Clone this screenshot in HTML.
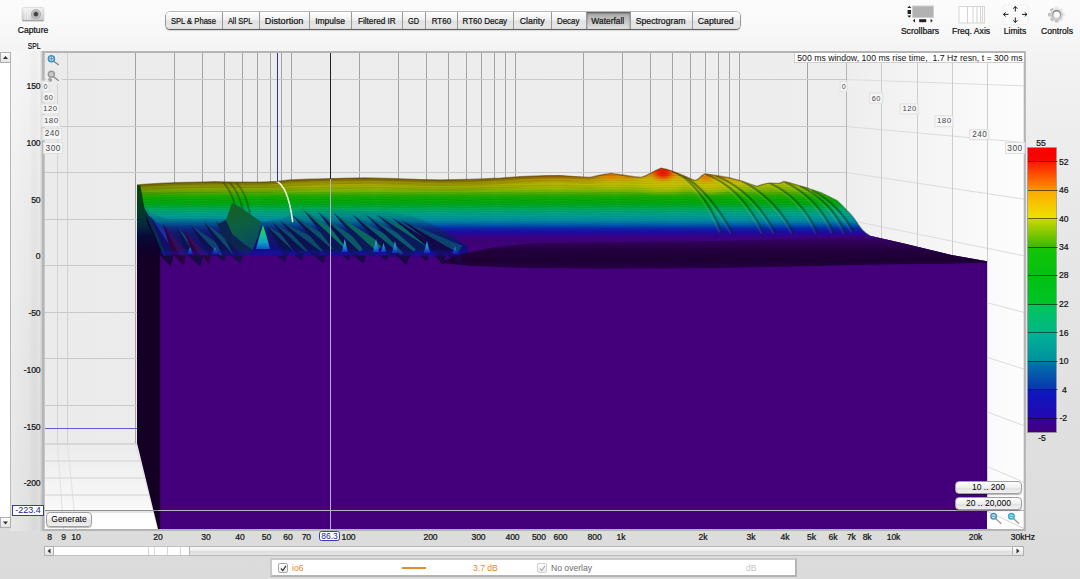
<!DOCTYPE html>
<html>
<head>
<meta charset="utf-8">
<title>REW Waterfall</title>
<style>
html,body{margin:0;padding:0;}
body{width:1080px;height:579px;overflow:hidden;position:relative;font-family:"Liberation Sans",sans-serif;font-size:9px;color:#000;
 background:linear-gradient(#fcfcfc 0px,#f8f8f8 30px,#f3f3f3 55px,#e9e9e9 200px,#e0e0e0 420px,#dbdbdb 579px);}
.abs{position:absolute;}
.lbl{position:absolute;white-space:nowrap;line-height:10px;font-size:8.6px;color:#111;-webkit-text-stroke:.22px;}
.yl,.xl{letter-spacing:-.12px;}
.yl{left:10px;width:30.5px;text-align:right;}
.xl{top:532px;width:40px;text-align:center;}
.tl{position:absolute;transform:translate(-50%,-50%);line-height:1;padding:1px 1px 0.5px 1.5px;color:#484848;background:rgba(247,247,247,.9);border:1px solid #dedede;letter-spacing:.45px;white-space:nowrap;}
#tabs{position:absolute;left:165.5px;top:12px;height:17px;width:574px;border-radius:4px;box-shadow:0 1px 1.5px rgba(0,0,0,.6),0 0 0 .6px rgba(0,0,0,.5);
 background:linear-gradient(#ffffff,#f0f0f0 45%,#e1e1e1 55%,#e6e6e6 85%,#dcdcdc);display:flex;overflow:hidden;}
#tabs div{-webkit-text-stroke:.2px;height:17px;line-height:18.6px;text-align:center;font-size:8.6px;white-space:nowrap;color:#111;border-right:1px solid #9a9a9a;box-sizing:border-box;}
#tabs div:last-child{border-right:none;}
#tabs span{display:inline-block;transform-origin:50% 50%;}
#tabs div.sel{background:linear-gradient(#9d9d9d,#b9b9b9 30%,#d0d0d0 70%,#e2e2e2);box-shadow:inset 0 1px 2px rgba(0,0,0,.5);}
.tb{position:absolute;text-align:center;font-size:8.6px;color:#111;-webkit-text-stroke:.22px;white-space:nowrap;line-height:10px;}
.btn{position:absolute;box-sizing:border-box;border:1px solid #9f9f9f;border-radius:4px;background:linear-gradient(#ffffff,#efefef 50%,#e0e0e0 52%,#f1f1f1);
 font-size:8.5px;text-align:center;box-shadow:0 1px 1px rgba(0,0,0,.28);white-space:nowrap;}
.sbb{box-sizing:border-box;border:1px solid #b0b0b0;background:linear-gradient(#fdfdfd,#e3e3e3);}
.cb{width:10px;height:10px;box-sizing:border-box;border:1px solid #a8a8a8;border-radius:2px;background:linear-gradient(#fff,#ececec);}
</style>
</head>
<body>
<div id="tabs">
<div style="width:57px"><span style="transform:scaleX(0.886)">SPL &amp; Phase</span></div><div style="width:37px"><span style="transform:scaleX(0.866)">All SPL</span></div><div style="width:50px"><span style="transform:scaleX(1.063)">Distortion</span></div><div style="width:42px"><span style="transform:scaleX(0.987)">Impulse</span></div><div style="width:51px"><span style="transform:scaleX(0.954)">Filtered IR</span></div><div style="width:23px"><span style="transform:scaleX(0.861)">GD</span></div><div style="width:32px"><span style="transform:scaleX(0.935)">RT60</span></div><div style="width:56px"><span style="transform:scaleX(0.939)">RT60 Decay</span></div><div style="width:38px"><span style="transform:scaleX(1.022)">Clarity</span></div><div style="width:35px"><span style="transform:scaleX(0.924)">Decay</span></div><div class="sel" style="width:44px"><span style="transform:scaleX(0.979)">Waterfall</span></div><div style="width:62px"><span style="transform:scaleX(1.012)">Spectrogram</span></div><div style="width:47px"><span style="transform:scaleX(1.015)">Captured</span></div>
</div>
<div class="tb" style="left:13px;top:25px;width:40px;">Capture</div>
<div class="tb" style="left:895px;top:26px;width:50px;">Scrollbars</div>
<div class="tb" style="left:946px;top:26px;width:50px;">Freq. Axis</div>
<div class="tb" style="left:995px;top:26px;width:40px;">Limits</div>
<div class="tb" style="left:1035px;top:26px;width:44px;">Controls</div>
<div class="lbl" style="left:24px;top:41px;width:20px;text-align:center"><span style="display:inline-block;transform:scaleX(.78)">SPL</span></div>

<svg id="plot" class="abs" style="left:0;top:0" width="1080" height="579" viewBox="0 0 1080 579">
<defs>
<linearGradient id="bw" x1="0" y1="0" x2="1" y2="0"><stop offset="0" stop-color="#ebebeb"/><stop offset="1" stop-color="#eeeeee"/></linearGradient>
<linearGradient id="rw" x1="0" y1="0" x2="1" y2="0"><stop offset="0" stop-color="#eeeeee"/><stop offset=".8" stop-color="#fafafa"/><stop offset="1" stop-color="#fdfdfd"/></linearGradient>
<linearGradient id="ystrip" x1="0" y1="0" x2="1" y2="0"><stop offset="0" stop-color="#ffffff" stop-opacity=".32"/><stop offset=".55" stop-color="#ffffff" stop-opacity=".08"/><stop offset=".8" stop-color="#000000" stop-opacity="0"/><stop offset="1" stop-color="#000000" stop-opacity=".035"/></linearGradient>
<linearGradient id="lsoft" x1="0" y1="0" x2="1" y2="0"><stop offset="0" stop-color="#b4b4b4" stop-opacity="0"/><stop offset="1" stop-color="#b4b4b4" stop-opacity=".8"/></linearGradient>
<linearGradient id="fl" x1="0" y1="0" x2="0" y2="1"><stop offset="0" stop-color="#ececec"/><stop offset=".75" stop-color="#f8f8f8"/><stop offset=".8" stop-color="#ffffff"/><stop offset="1" stop-color="#ffffff"/></linearGradient>
<linearGradient id="rb" gradientUnits="userSpaceOnUse" x1="0" y1="165" x2="0" y2="265">
<stop offset="0" stop-color="#f40800"/>
<stop offset=".03" stop-color="#f41000"/>
<stop offset=".06" stop-color="#f03800"/>
<stop offset=".09" stop-color="#e86c00"/>
<stop offset=".12" stop-color="#e09400"/>
<stop offset=".15" stop-color="#d4b400"/>
<stop offset=".19" stop-color="#c4c000"/>
<stop offset=".225" stop-color="#a8bc00"/>
<stop offset=".255" stop-color="#80b800"/>
<stop offset=".285" stop-color="#48b000"/>
<stop offset=".315" stop-color="#18ac00"/>
<stop offset=".38" stop-color="#00aa10"/>
<stop offset=".42" stop-color="#00aa40"/>
<stop offset=".46" stop-color="#00a878"/>
<stop offset=".51" stop-color="#00a098"/>
<stop offset=".56" stop-color="#0088a8"/>
<stop offset=".60" stop-color="#0058b0"/>
<stop offset=".635" stop-color="#0c24b0"/>
<stop offset=".675" stop-color="#2008a4"/>
<stop offset=".715" stop-color="#38008c"/>
<stop offset=".76" stop-color="#40007a"/>
<stop offset=".9" stop-color="#43007a"/>
<stop offset="1" stop-color="#43007a"/>
</linearGradient>
<linearGradient id="olv" gradientUnits="userSpaceOnUse" x1="0" y1="176" x2="0" y2="194"><stop offset="0" stop-color="#5c4c00" stop-opacity=".55"/><stop offset=".6" stop-color="#607000" stop-opacity=".3"/><stop offset="1" stop-color="#408000" stop-opacity="0"/></linearGradient>
<linearGradient id="olvh" gradientUnits="userSpaceOnUse" x1="137" y1="0" x2="650" y2="0"><stop offset="0" stop-color="#343000" stop-opacity="1"/><stop offset=".68" stop-color="#343000" stop-opacity=".95"/><stop offset=".84" stop-color="#343000" stop-opacity=".6"/><stop offset="1" stop-color="#343000" stop-opacity="0"/></linearGradient>
<radialGradient id="glowr"><stop offset="0" stop-color="#f40c00" stop-opacity="1"/><stop offset=".35" stop-color="#f02800" stop-opacity=".9"/><stop offset=".65" stop-color="#ec7000" stop-opacity=".6"/><stop offset="1" stop-color="#e0b000" stop-opacity="0"/></radialGradient>
<radialGradient id="glowy"><stop offset="0" stop-color="#d4c000" stop-opacity=".85"/><stop offset=".55" stop-color="#c4c400" stop-opacity=".5"/><stop offset="1" stop-color="#a0c000" stop-opacity="0"/></radialGradient>
<radialGradient id="glowo"><stop offset="0" stop-color="#ec7400" stop-opacity=".9"/><stop offset=".5" stop-color="#e89000" stop-opacity=".6"/><stop offset="1" stop-color="#d8b400" stop-opacity="0"/></radialGradient>
<linearGradient id="grn" gradientUnits="userSpaceOnUse" x1="735" y1="0" x2="800" y2="0"><stop offset="0" stop-color="#40a800" stop-opacity="0"/><stop offset="1" stop-color="#40a800" stop-opacity=".22"/></linearGradient>
<pattern id="tex" patternUnits="userSpaceOnUse" width="60" height="2.4" patternTransform="rotate(0)"><path d="M0,0.6 Q15,-0.4 30,0.6 T60,0.6" fill="none" stroke="#002800" stroke-opacity=".35" stroke-width=".7"/></pattern>
<linearGradient id="rzone" gradientUnits="userSpaceOnUse" x1="0" y1="205" x2="0" y2="259"><stop offset="0" stop-color="#085060" stop-opacity="0"/><stop offset=".3" stop-color="#0a4068" stop-opacity=".3"/><stop offset=".55" stop-color="#0c1c60" stop-opacity=".85"/><stop offset=".8" stop-color="#0e0e78" stop-opacity=".95"/><stop offset=".92" stop-color="#180c90" stop-opacity="1"/><stop offset="1" stop-color="#43007a" stop-opacity="1"/></linearGradient>
<linearGradient id="modal" gradientUnits="userSpaceOnUse" x1="232" y1="203" x2="250" y2="250"><stop offset="0" stop-color="#186020"/><stop offset=".45" stop-color="#0c6040"/><stop offset="1" stop-color="#0a4868"/></linearGradient>
<linearGradient id="spike" gradientUnits="userSpaceOnUse" x1="0" y1="225" x2="0" y2="250"><stop offset="0" stop-color="#30d040"/><stop offset=".35" stop-color="#10cc80"/><stop offset=".7" stop-color="#10a0c8"/><stop offset="1" stop-color="#1048c8"/></linearGradient>
<linearGradient id="pk" gradientUnits="userSpaceOnUse" x1="0" y1="239" x2="0" y2="254"><stop offset="0" stop-color="#40c0d8"/><stop offset=".6" stop-color="#1c78d0"/><stop offset="1" stop-color="#1428c0"/></linearGradient>
<linearGradient id="bluefoot" gradientUnits="userSpaceOnUse" x1="0" y1="249" x2="0" y2="257"><stop offset="0" stop-color="#1020c0" stop-opacity="0"/><stop offset=".4" stop-color="#1414b8" stop-opacity=".9"/><stop offset=".8" stop-color="#2c08a0" stop-opacity=".9"/><stop offset="1" stop-color="#43007a" stop-opacity="1"/></linearGradient>
<linearGradient id="dband" gradientUnits="userSpaceOnUse" x1="0" y1="238" x2="0" y2="270"><stop offset="0" stop-color="#3e0078"/><stop offset=".2" stop-color="#34005e"/><stop offset=".4" stop-color="#260044"/><stop offset=".7" stop-color="#21003a"/><stop offset=".9" stop-color="#2a004c"/><stop offset="1" stop-color="#3a0068"/></linearGradient>
<clipPath id="dbclip"><polygon points="438,263 462,254 492,247.5 530,243.5 620,242 720,241 800,238.5 850,236 870,235.8 904,243.6 951.5,255 987,261.3 987,263 940,264 860,265 800,266.5 700,268.5 600,269 520,268 470,266"/></clipPath>
<linearGradient id="lface" gradientUnits="userSpaceOnUse" x1="0" y1="185" x2="0" y2="262"><stop offset="0" stop-color="#0c4400"/><stop offset=".3" stop-color="#043c20"/><stop offset=".5" stop-color="#042c3c"/><stop offset=".68" stop-color="#080838"/><stop offset=".85" stop-color="#10002a"/><stop offset="1" stop-color="#140024"/></linearGradient>
<linearGradient id="cs" x1="0" y1="0" x2="0" y2="1">
<stop offset="0.0001" stop-color="#f60000"/><stop offset="0.0500" stop-color="#f60800"/>
<stop offset="0.0501" stop-color="#ff1800"/><stop offset="0.1500" stop-color="#ff9400"/>
<stop offset="0.1501" stop-color="#ffa800"/><stop offset="0.2500" stop-color="#ece400"/>
<stop offset="0.2501" stop-color="#ccd800"/><stop offset="0.3500" stop-color="#38b800"/>
<stop offset="0.3501" stop-color="#14c408"/><stop offset="0.4500" stop-color="#04c010"/>
<stop offset="0.4501" stop-color="#00c010"/><stop offset="0.5500" stop-color="#00c428"/>
<stop offset="0.5501" stop-color="#00c458"/><stop offset="0.6500" stop-color="#00b888"/>
<stop offset="0.6501" stop-color="#00b494"/><stop offset="0.7500" stop-color="#0090a0"/>
<stop offset="0.7501" stop-color="#0078a8"/><stop offset="0.8500" stop-color="#0834b0"/>
<stop offset="0.8501" stop-color="#0c18c0"/><stop offset="0.9500" stop-color="#2408b0"/>
<stop offset="0.9501" stop-color="#3400a0"/><stop offset="1.0000" stop-color="#42007c"/>
</linearGradient>
</defs>

<rect x="11" y="51" width="34" height="480" fill="url(#ystrip)"/>
<rect x="42.5" y="51" width="983" height="480" fill="#b4b4b4"/>
<rect x="40" y="51" width="3" height="480" fill="url(#lsoft)"/>
<rect x="44.5" y="53" width="979.5" height="476" fill="#ffffff"/>
<polygon points="45,53 846,53 846,444 45,444" fill="url(#bw)"/>
<polygon points="846,53 1025,53 1025,529 846,444" fill="url(#rw)"/>
<polygon points="45,444 846,444 1025,529 45,529" fill="url(#fl)"/>
<g id="grid" stroke-width="1" fill="none"><line x1="57.5" y1="53" x2="57.5" y2="444" stroke="#d2d2d2"/>
<line x1="57.5" y1="444" x2="63.5" y2="529" stroke="#e2e2e2"/>
<line x1="67.5" y1="53" x2="67.5" y2="444" stroke="#d2d2d2"/>
<line x1="67.5" y1="444" x2="76.0" y2="529" stroke="#e2e2e2"/>
<line x1="135.5" y1="53" x2="135.5" y2="444" stroke="#a4a4a4"/>
<line x1="135.5" y1="444" x2="158.0" y2="529" stroke="#e2e2e2"/>
<line x1="174.5" y1="53" x2="174.5" y2="444" stroke="#a4a4a4"/>
<line x1="174.5" y1="444" x2="206.0" y2="529" stroke="#e2e2e2"/>
<line x1="202.5" y1="53" x2="202.5" y2="444" stroke="#a4a4a4"/>
<line x1="202.5" y1="444" x2="240.0" y2="529" stroke="#e2e2e2"/>
<line x1="224.5" y1="53" x2="224.5" y2="444" stroke="#a4a4a4"/>
<line x1="224.5" y1="444" x2="266.4" y2="529" stroke="#e2e2e2"/>
<line x1="242.5" y1="53" x2="242.5" y2="444" stroke="#a4a4a4"/>
<line x1="242.5" y1="444" x2="288.0" y2="529" stroke="#e2e2e2"/>
<line x1="257.5" y1="53" x2="257.5" y2="444" stroke="#a4a4a4"/>
<line x1="257.5" y1="444" x2="306.3" y2="529" stroke="#e2e2e2"/>
<line x1="270.5" y1="53" x2="270.5" y2="444" stroke="#a4a4a4"/>
<line x1="270.5" y1="444" x2="322.1" y2="529" stroke="#e2e2e2"/>
<line x1="281.5" y1="53" x2="281.5" y2="444" stroke="#a4a4a4"/>
<line x1="281.5" y1="444" x2="336.0" y2="529" stroke="#e2e2e2"/>
<line x1="291.5" y1="53" x2="291.5" y2="444" stroke="#a4a4a4"/>
<line x1="291.5" y1="444" x2="348.5" y2="529" stroke="#e2e2e2"/>
<line x1="359.5" y1="53" x2="359.5" y2="444" stroke="#a4a4a4"/>
<line x1="359.5" y1="444" x2="430.5" y2="529" stroke="#e2e2e2"/>
<line x1="398.5" y1="53" x2="398.5" y2="444" stroke="#a4a4a4"/>
<line x1="398.5" y1="444" x2="478.5" y2="529" stroke="#e2e2e2"/>
<line x1="426.5" y1="53" x2="426.5" y2="444" stroke="#a4a4a4"/>
<line x1="426.5" y1="444" x2="512.5" y2="529" stroke="#e2e2e2"/>
<line x1="448.5" y1="53" x2="448.5" y2="444" stroke="#a4a4a4"/>
<line x1="448.5" y1="444" x2="538.9" y2="529" stroke="#e2e2e2"/>
<line x1="466.5" y1="53" x2="466.5" y2="444" stroke="#a4a4a4"/>
<line x1="466.5" y1="444" x2="560.5" y2="529" stroke="#e2e2e2"/>
<line x1="481.5" y1="53" x2="481.5" y2="444" stroke="#a4a4a4"/>
<line x1="481.5" y1="444" x2="578.8" y2="529" stroke="#e2e2e2"/>
<line x1="494.5" y1="53" x2="494.5" y2="444" stroke="#a4a4a4"/>
<line x1="494.5" y1="444" x2="594.6" y2="529" stroke="#e2e2e2"/>
<line x1="505.5" y1="53" x2="505.5" y2="444" stroke="#a4a4a4"/>
<line x1="505.5" y1="444" x2="608.5" y2="529" stroke="#e2e2e2"/>
<line x1="515.5" y1="53" x2="515.5" y2="444" stroke="#a4a4a4"/>
<line x1="515.5" y1="444" x2="621.0" y2="529" stroke="#e2e2e2"/>
<line x1="583.5" y1="53" x2="583.5" y2="444" stroke="#a4a4a4"/>
<line x1="583.5" y1="444" x2="703.0" y2="529" stroke="#e2e2e2"/>
<line x1="622.5" y1="53" x2="622.5" y2="444" stroke="#a4a4a4"/>
<line x1="622.5" y1="444" x2="751.0" y2="529" stroke="#e2e2e2"/>
<line x1="650.5" y1="53" x2="650.5" y2="444" stroke="#a4a4a4"/>
<line x1="650.5" y1="444" x2="785.0" y2="529" stroke="#e2e2e2"/>
<line x1="672.5" y1="53" x2="672.5" y2="444" stroke="#a4a4a4"/>
<line x1="672.5" y1="444" x2="811.4" y2="529" stroke="#e2e2e2"/>
<line x1="690.5" y1="53" x2="690.5" y2="444" stroke="#a4a4a4"/>
<line x1="690.5" y1="444" x2="833.0" y2="529" stroke="#e2e2e2"/>
<line x1="705.5" y1="53" x2="705.5" y2="444" stroke="#a4a4a4"/>
<line x1="705.5" y1="444" x2="851.3" y2="529" stroke="#e2e2e2"/>
<line x1="718.5" y1="53" x2="718.5" y2="444" stroke="#a4a4a4"/>
<line x1="718.5" y1="444" x2="867.1" y2="529" stroke="#e2e2e2"/>
<line x1="729.5" y1="53" x2="729.5" y2="444" stroke="#a4a4a4"/>
<line x1="729.5" y1="444" x2="881.0" y2="529" stroke="#e2e2e2"/>
<line x1="739.5" y1="53" x2="739.5" y2="444" stroke="#a4a4a4"/>
<line x1="739.5" y1="444" x2="893.5" y2="529" stroke="#e2e2e2"/>
<line x1="807.5" y1="53" x2="807.5" y2="444" stroke="#a4a4a4"/>
<line x1="807.5" y1="444" x2="975.5" y2="529" stroke="#e2e2e2"/>
<line x1="45" y1="79.5" x2="846" y2="79.5" stroke="#c9c9c9"/>
<line x1="846" y1="79.5" x2="1025" y2="85.9" stroke="#dcdcdc"/>
<line x1="45" y1="126.5" x2="846" y2="126.5" stroke="#c9c9c9"/>
<line x1="846" y1="126.5" x2="1025" y2="142.6" stroke="#dcdcdc"/>
<line x1="45" y1="172.5" x2="846" y2="172.5" stroke="#c9c9c9"/>
<line x1="846" y1="172.5" x2="1025" y2="199.3" stroke="#dcdcdc"/>
<line x1="45" y1="219.5" x2="846" y2="219.5" stroke="#c9c9c9"/>
<line x1="846" y1="219.5" x2="1025" y2="256.0" stroke="#dcdcdc"/>
<line x1="45" y1="265.5" x2="846" y2="265.5" stroke="#c9c9c9"/>
<line x1="846" y1="265.5" x2="1025" y2="312.7" stroke="#dcdcdc"/>
<line x1="45" y1="312.5" x2="846" y2="312.5" stroke="#c9c9c9"/>
<line x1="846" y1="312.5" x2="1025" y2="369.4" stroke="#dcdcdc"/>
<line x1="45" y1="358.5" x2="846" y2="358.5" stroke="#c9c9c9"/>
<line x1="846" y1="358.5" x2="1025" y2="426.1" stroke="#dcdcdc"/>
<line x1="45" y1="405.5" x2="846" y2="405.5" stroke="#c9c9c9"/>
<line x1="846" y1="405.5" x2="1025" y2="482.8" stroke="#dcdcdc"/>
<line x1="846.5" y1="53" x2="846.5" y2="444.0" stroke="#b4b4b4"/>
<line x1="881.5" y1="53" x2="881.5" y2="461.0" stroke="#cdcdcd"/>
<line x1="881.5" y1="461.0" x2="45" y2="461.0" stroke="#dcdcdc" stroke-width="1.6"/>
<line x1="917.5" y1="53" x2="917.5" y2="478.0" stroke="#cdcdcd"/>
<line x1="917.5" y1="478.0" x2="45" y2="478.0" stroke="#dcdcdc" stroke-width="1.6"/>
<line x1="952.5" y1="53" x2="952.5" y2="495.0" stroke="#cdcdcd"/>
<line x1="952.5" y1="495.0" x2="45" y2="495.0" stroke="#dcdcdc" stroke-width="1.6"/>
<line x1="987.5" y1="53" x2="987.5" y2="512.0" stroke="#cdcdcd"/>
<line x1="987.5" y1="512.0" x2="45" y2="512.0" stroke="#dcdcdc" stroke-width="1.6"/>
<line x1="45" y1="444" x2="846" y2="444" stroke="#d0d0d0" stroke-width="1.6"/>
<line x1="846" y1="444.5" x2="1025" y2="529" stroke="#d4d4d4"/></g>
<rect x="43.5" y="52" width="981.2" height="478" fill="none" stroke="#b4b4b4" stroke-width="2"/>
<g id="wf">
<clipPath id="rbclip"><polygon points="137,184.9 150,184 175,182.8 200,182.2 215,181.8 235,182.2 260,182.3 277,181.4 290,180.0 310,179.2 335,178.6 365,178.0 395,178.8 420,179.6 440,180.0 470,179.4 500,178.2 520,176.8 545,175.8 560,175.6 575,176.6 590,177.4 601,175.0 611,173.4 622,175.0 634,176.8 641,177.4 646,175.6 651,173.0 656,170.4 661,168.3 666,169.2 672,171.1 683,175.5 690,178.6 695.5,180.6 699,178.4 702,175.6 705,174.0 710,174.6 715.5,175.5 729,177.8 742,181.2 751,184.4 757,186.3 762,184.6 768.5,183.1 776,183.4 780,183.2 784,181.6 790,183.0 799,185.6 809,188.5 821.5,192.8 828,196 837,200.6 841.5,204.7 847,210.5 851,214.4 855,219.6 858.5,224.8 862,229.4 865.5,232.8 870,235.8 904,243.6 951.5,255 987,261.3 987,300 137,300"/></clipPath>
<polygon fill="url(#rb)" points="137,184.9 150,184 175,182.8 200,182.2 215,181.8 235,182.2 260,182.3 277,181.4 290,180.0 310,179.2 335,178.6 365,178.0 395,178.8 420,179.6 440,180.0 470,179.4 500,178.2 520,176.8 545,175.8 560,175.6 575,176.6 590,177.4 601,175.0 611,173.4 622,175.0 634,176.8 641,177.4 646,175.6 651,173.0 656,170.4 661,168.3 666,169.2 672,171.1 683,175.5 690,178.6 695.5,180.6 699,178.4 702,175.6 705,174.0 710,174.6 715.5,175.5 729,177.8 742,181.2 751,184.4 757,186.3 762,184.6 768.5,183.1 776,183.4 780,183.2 784,181.6 790,183.0 799,185.6 809,188.5 821.5,192.8 828,196 837,200.6 841.5,204.7 847,210.5 851,214.4 855,219.6 858.5,224.8 862,229.4 865.5,232.8 870,235.8 904,243.6 951.5,255 987,261.3 987,300 137,300"/>
<g clip-path="url(#rbclip)">
<polyline points="137,184.9 150,184 175,182.8 200,182.2 215,181.8 235,182.2 260,182.3 277,181.4 290,180.0 310,179.2 335,178.6 365,178.0 395,178.8 420,179.6 440,180.0 470,179.4 500,178.2 520,176.8 545,175.8 560,175.6 575,176.6 590,177.4 601,175.0 611,173.4 622,175.0 634,176.8 641,177.4" fill="none" stroke="url(#olvh)" stroke-opacity=".13" stroke-width="22"/>
<polyline points="137,184.9 150,184 175,182.8 200,182.2 215,181.8 235,182.2 260,182.3 277,181.4 290,180.0 310,179.2 335,178.6 365,178.0 395,178.8 420,179.6 440,180.0 470,179.4 500,178.2 520,176.8 545,175.8 560,175.6 575,176.6 590,177.4 601,175.0 611,173.4 622,175.0 634,176.8 641,177.4" fill="none" stroke="url(#olvh)" stroke-opacity=".2" stroke-width="12"/>
<polyline points="137,184.9 150,184 175,182.8 200,182.2 215,181.8 235,182.2 260,182.3 277,181.4 290,180.0 310,179.2 335,178.6 365,178.0 395,178.8 420,179.6 440,180.0 470,179.4 500,178.2 520,176.8 545,175.8 560,175.6 575,176.6 590,177.4 601,175.0 611,173.4 622,175.0 634,176.8 641,177.4" fill="none" stroke="url(#olvh)" stroke-opacity=".3" stroke-width="5"/>
<rect x="735" y="175" width="140" height="22" fill="url(#grn)"/>
<ellipse cx="662" cy="183" rx="34" ry="13" fill="url(#glowy)"/>
<ellipse cx="710" cy="186" rx="24" ry="10" fill="url(#glowy)"/>
<ellipse cx="663" cy="172.5" rx="17" ry="11" fill="url(#glowr)"/>
<ellipse cx="707" cy="177" rx="14" ry="8" fill="url(#glowo)"/>
<ellipse cx="611" cy="175.5" rx="16" ry="6" fill="url(#glowo)"/>
<rect x="137" y="170" width="850" height="75" fill="url(#tex)" opacity=".55"/>
<path d="M672,171 Q700,182 722,232" fill="none" stroke="#003010" stroke-opacity=".42" stroke-width="2.2"/>
<path d="M672,171 Q700,182 722,232" transform="translate(-2.5,0.5)" fill="none" stroke="#c8ff60" stroke-opacity=".10" stroke-width="2"/>
<path d="M683,175.5 Q708,190 733,233" fill="none" stroke="#003010" stroke-opacity=".42" stroke-width="2.2"/>
<path d="M683,175.5 Q708,190 733,233" transform="translate(-2.5,0.5)" fill="none" stroke="#c8ff60" stroke-opacity=".10" stroke-width="2"/>
<path d="M706,174.5 Q740,186 764,233" fill="none" stroke="#003010" stroke-opacity=".42" stroke-width="2.2"/>
<path d="M706,174.5 Q740,186 764,233" transform="translate(-2.5,0.5)" fill="none" stroke="#c8ff60" stroke-opacity=".10" stroke-width="2"/>
<path d="M716,176 Q752,190 776,233" fill="none" stroke="#003010" stroke-opacity=".42" stroke-width="2.2"/>
<path d="M716,176 Q752,190 776,233" transform="translate(-2.5,0.5)" fill="none" stroke="#c8ff60" stroke-opacity=".10" stroke-width="2"/>
<path d="M742,181 Q775,198 794,233" fill="none" stroke="#003010" stroke-opacity=".42" stroke-width="2.2"/>
<path d="M742,181 Q775,198 794,233" transform="translate(-2.5,0.5)" fill="none" stroke="#c8ff60" stroke-opacity=".10" stroke-width="2"/>
<path d="M770,183.5 Q800,196 818,233" fill="none" stroke="#003010" stroke-opacity=".42" stroke-width="2.2"/>
<path d="M770,183.5 Q800,196 818,233" transform="translate(-2.5,0.5)" fill="none" stroke="#c8ff60" stroke-opacity=".10" stroke-width="2"/>
<path d="M785,182 Q818,198 834,233" fill="none" stroke="#003010" stroke-opacity=".42" stroke-width="2.2"/>
<path d="M785,182 Q818,198 834,233" transform="translate(-2.5,0.5)" fill="none" stroke="#c8ff60" stroke-opacity=".10" stroke-width="2"/>
<path d="M800,186 Q830,200 846,233" fill="none" stroke="#003010" stroke-opacity=".42" stroke-width="2.2"/>
<path d="M800,186 Q830,200 846,233" transform="translate(-2.5,0.5)" fill="none" stroke="#c8ff60" stroke-opacity=".10" stroke-width="2"/>
<path d="M812,190 Q838,204 854,232" fill="none" stroke="#003010" stroke-opacity=".42" stroke-width="2.2"/>
<path d="M812,190 Q838,204 854,232" transform="translate(-2.5,0.5)" fill="none" stroke="#c8ff60" stroke-opacity=".10" stroke-width="2"/>
<path d="M223,182 Q231,190 236,208" fill="none" stroke="#203800" stroke-opacity=".4" stroke-width="2"/>
<path d="M229,182 Q238,190 243,210" fill="none" stroke="#203800" stroke-opacity=".4" stroke-width="2"/>
<path d="M236,182.5 Q246,192 250,214" fill="none" stroke="#203800" stroke-opacity=".4" stroke-width="2"/>
</g>
<polyline points="137,184.9 150,184 175,182.8 200,182.2 215,181.8 235,182.2 260,182.3 277,181.4 290,180.0 310,179.2 335,178.6 365,178.0 395,178.8 420,179.6 440,180.0 470,179.4 500,178.2 520,176.8 545,175.8 560,175.6 575,176.6 590,177.4 601,175.0 611,173.4 622,175.0 634,176.8 641,177.4 646,175.6 651,173.0 656,170.4 661,168.3 666,169.2 672,171.1 683,175.5 690,178.6 695.5,180.6 699,178.4 702,175.6 705,174.0 710,174.6 715.5,175.5 729,177.8 742,181.2 751,184.4 757,186.3 762,184.6 768.5,183.1 776,183.4 780,183.2 784,181.6 790,183.0 799,185.6 809,188.5" fill="none" stroke="#4a3000" stroke-opacity=".5" stroke-width="1.4"/>
<polyline points="809,188.5 821.5,192.8 828,196 837,200.6 841.5,204.7 847,210.5 851,214.4 855,219.6 858.5,224.8 862,229.4 865.5,232.8 870,235.8" fill="none" stroke="#1c5a20" stroke-opacity=".45" stroke-width="1.2"/>
<g id="ridges">
<polygon points="141,200 150,212 166,219 225,219 262,222 282,219 300,209 345,210 385,212 412,216 440,228 468,247 468,259 160,259 152,234" fill="url(#rzone)"/>
<polygon points="141,203 175.7,257.9 166,262" fill="#082c50" opacity="1"/><polygon points="141,203 166,262 156.3,266.1" fill="#08042c" opacity="1"/>
<polygon points="150,216 186.7,252.2 178,258" fill="#1830a0" opacity="1"/><polygon points="150,216 178,258 169.3,263.8" fill="#101068" opacity="1"/>
<polygon points="163,224 192.3,258.5 184,263" fill="#30105c" opacity="1"/><polygon points="163,224 184,263 175.7,267.5" fill="#300040" opacity="1"/>
<polygon points="176,226 207.9,257.9 200,263" fill="#103c78" opacity="1"/><polygon points="176,226 200,263 192.1,268.1" fill="#0c1450" opacity="1"/>
<polygon points="184,231 212.0,258.4 205,263" fill="#30105c" opacity="1"/><polygon points="184,231 205,263 198.0,267.6" fill="#34003c" opacity="1"/>
<polygon points="190.5,225 226.8,249.5 220,256" fill="#0c4470" opacity="1"/><polygon points="190.5,225 220,256 213.2,262.5" fill="#0c1250" opacity="1"/>
<polygon points="204,222 241.1,249.7 234,256" fill="#0c4a6c" opacity="1"/><polygon points="204,222 234,256 226.9,262.3" fill="#0c1250" opacity="1"/>
<polygon points="216,221 247.5,246.7 241,252" fill="#0c5068" opacity="1"/><polygon points="216,221 241,252 234.5,257.3" fill="#0c1450" opacity="1"/>
<polygon points="266.5,226 298.5,243.1 292,250" fill="#0a4a6a" opacity="1"/><polygon points="266.5,226 292,250 285.5,256.9" fill="#0c1250" opacity="1"/>
<polygon points="272,222 312.3,244.9 306,252" fill="#0a4868" opacity="1"/><polygon points="272,222 306,252 299.7,259.1" fill="#0c1250" opacity="1"/>
<polygon points="280,221 327.2,244.4 321.5,252" fill="#0a4a6a" opacity="1"/><polygon points="280,221 321.5,252 315.8,259.6" fill="#0c1250" opacity="1"/>
<polygon points="292,215 338.5,243.6 333,250" fill="#0a5068" opacity="1"/><polygon points="292,215 333,250 327.5,256.4" fill="#0a1450" opacity="1"/>
<polygon points="304,210.6 350.5,241.1 344,248" fill="#087060" opacity="1"/><polygon points="304,210.6 344,248 337.5,254.9" fill="#0a1a58" opacity="1"/>
<polygon points="318,212 365.8,245.9 360,252" fill="#0a5868" opacity="1"/><polygon points="318,212 360,252 354.2,258.1" fill="#0c1450" opacity="1"/>
<polygon points="333.5,213 383.0,244.3 376.7,251.4" fill="#08685c" opacity="1"/><polygon points="333.5,213 376.7,251.4 370.4,258.5" fill="#0a1a58" opacity="1"/>
<polygon points="352.5,214.8 407.0,247.5 401,254.8" fill="#0a5c68" opacity="1"/><polygon points="352.5,214.8 401,254.8 395.0,262.1" fill="#0c1250" opacity="1"/>
<polygon points="366,215 419.1,245.3 414,252" fill="#085a6c" opacity="1"/><polygon points="366,215 414,252 408.9,258.7" fill="#0e1250" opacity="1"/>
<polygon points="376.7,214.8 432.1,239.0 427,247" fill="#086860" opacity="1"/><polygon points="376.7,214.8 427,247 421.9,255.0" fill="#0a1a5c" opacity="1"/>
<polygon points="392,218 450.4,243.8 446,251" fill="#0a4c70" opacity="1"/><polygon points="392,218 446,251 441.6,258.2" fill="#100c4c" opacity="1"/>
<polygon points="401,220 462.2,245.7 458,253" fill="#0a4470" opacity="1"/><polygon points="401,220 458,253 453.8,260.3" fill="#140848" opacity="1"/>
<polygon points="232,203 240,207 261.5,222 258,236 252.5,250 244,244 232,234 226,220" fill="url(#modal)"/>
<polygon points="226,220 232,234 244,244 252.5,250 246,256 236,250 222,236 218,224" fill="#0c2450"/>
<polygon points="263,225 259.5,236 256,249 270,249 266.5,236" fill="url(#spike)"/>
<polygon points="344.8,239 341.8,252 347.8,252" fill="url(#pk)"/>
<polygon points="376,239 373,252 379,252" fill="url(#pk)"/>
<polygon points="383.6,243 381.0,252 386.20000000000005,252" fill="url(#pk)"/>
<polygon points="395,241 392,253 398,253" fill="url(#pk)"/>
<polygon points="427,241 423.8,253 430.2,253" fill="url(#pk)"/>
<polygon points="455,246 452.4,254 457.6,254" fill="url(#pk)"/>
<polygon points="190,247 187,254 193,254" fill="url(#pk)"/>
<polygon points="215,247 212,254 218,254" fill="url(#pk)"/>
<rect x="160" y="249" width="300" height="8" fill="url(#bluefoot)" opacity=".38"/>
</g>
<polygon points="438,263 462,254 492,247.5 530,243.5 620,242 720,241 800,238.5 850,236 870,235.8 904,243.6 951.5,255 987,261.3 987,263 940,264 860,265 800,266.5 700,268.5 600,269 520,268 470,266" fill="url(#dband)"/>
<g clip-path="url(#dbclip)" stroke="#12001e" stroke-opacity=".32" stroke-width="1.6">
<line x1="380" y1="238" x2="465" y2="272"/>
<line x1="387" y1="238" x2="472" y2="272"/>
<line x1="394" y1="238" x2="479" y2="272"/>
<line x1="401" y1="238" x2="486" y2="272"/>
<line x1="408" y1="238" x2="493" y2="272"/>
<line x1="415" y1="238" x2="500" y2="272"/>
<line x1="422" y1="238" x2="507" y2="272"/>
<line x1="429" y1="238" x2="514" y2="272"/>
<line x1="436" y1="238" x2="521" y2="272"/>
<line x1="443" y1="238" x2="528" y2="272"/>
<line x1="450" y1="238" x2="535" y2="272"/>
<line x1="457" y1="238" x2="542" y2="272"/>
<line x1="464" y1="238" x2="549" y2="272"/>
<line x1="471" y1="238" x2="556" y2="272"/>
<line x1="478" y1="238" x2="563" y2="272"/>
<line x1="485" y1="238" x2="570" y2="272"/>
<line x1="492" y1="238" x2="577" y2="272"/>
<line x1="499" y1="238" x2="584" y2="272"/>
<line x1="506" y1="238" x2="591" y2="272"/>
<line x1="513" y1="238" x2="598" y2="272"/>
<line x1="520" y1="238" x2="605" y2="272"/>
<line x1="527" y1="238" x2="612" y2="272"/>
<line x1="534" y1="238" x2="619" y2="272"/>
<line x1="541" y1="238" x2="626" y2="272"/>
<line x1="548" y1="238" x2="633" y2="272"/>
<line x1="555" y1="238" x2="640" y2="272"/>
<line x1="562" y1="238" x2="647" y2="272"/>
<line x1="569" y1="238" x2="654" y2="272"/>
<line x1="576" y1="238" x2="661" y2="272"/>
<line x1="583" y1="238" x2="668" y2="272"/>
<line x1="590" y1="238" x2="675" y2="272"/>
<line x1="597" y1="238" x2="682" y2="272"/>
<line x1="604" y1="238" x2="689" y2="272"/>
<line x1="611" y1="238" x2="696" y2="272"/>
<line x1="618" y1="238" x2="703" y2="272"/>
<line x1="625" y1="238" x2="710" y2="272"/>
<line x1="632" y1="238" x2="717" y2="272"/>
<line x1="639" y1="238" x2="724" y2="272"/>
<line x1="646" y1="238" x2="731" y2="272"/>
<line x1="653" y1="238" x2="738" y2="272"/>
<line x1="660" y1="238" x2="745" y2="272"/>
<line x1="667" y1="238" x2="752" y2="272"/>
<line x1="674" y1="238" x2="759" y2="272"/>
<line x1="681" y1="238" x2="766" y2="272"/>
<line x1="688" y1="238" x2="773" y2="272"/>
<line x1="695" y1="238" x2="780" y2="272"/>
<line x1="702" y1="238" x2="787" y2="272"/>
<line x1="709" y1="238" x2="794" y2="272"/>
<line x1="716" y1="238" x2="801" y2="272"/>
<line x1="723" y1="238" x2="808" y2="272"/>
<line x1="730" y1="238" x2="815" y2="272"/>
<line x1="737" y1="238" x2="822" y2="272"/>
<line x1="744" y1="238" x2="829" y2="272"/>
<line x1="751" y1="238" x2="836" y2="272"/>
<line x1="758" y1="238" x2="843" y2="272"/>
<line x1="765" y1="238" x2="850" y2="272"/>
<line x1="772" y1="238" x2="857" y2="272"/>
<line x1="779" y1="238" x2="864" y2="272"/>
<line x1="786" y1="238" x2="871" y2="272"/>
<line x1="793" y1="238" x2="878" y2="272"/>
<line x1="800" y1="238" x2="885" y2="272"/>
<line x1="807" y1="238" x2="892" y2="272"/>
<line x1="814" y1="238" x2="899" y2="272"/>
<line x1="821" y1="238" x2="906" y2="272"/>
<line x1="828" y1="238" x2="913" y2="272"/>
<line x1="835" y1="238" x2="920" y2="272"/>
<line x1="842" y1="238" x2="927" y2="272"/>
<line x1="849" y1="238" x2="934" y2="272"/>
<line x1="856" y1="238" x2="941" y2="272"/>
<line x1="863" y1="238" x2="948" y2="272"/>
<line x1="870" y1="238" x2="955" y2="272"/>
<line x1="877" y1="238" x2="962" y2="272"/>
<line x1="884" y1="238" x2="969" y2="272"/>
<line x1="891" y1="238" x2="976" y2="272"/>
<line x1="898" y1="238" x2="983" y2="272"/>
<line x1="905" y1="238" x2="990" y2="272"/>
<line x1="912" y1="238" x2="997" y2="272"/>
<line x1="919" y1="238" x2="1004" y2="272"/>
<line x1="926" y1="238" x2="1011" y2="272"/>
<line x1="933" y1="238" x2="1018" y2="272"/>
<line x1="940" y1="238" x2="1025" y2="272"/>
<line x1="947" y1="238" x2="1032" y2="272"/>
<line x1="954" y1="238" x2="1039" y2="272"/>
<line x1="961" y1="238" x2="1046" y2="272"/>
<line x1="968" y1="238" x2="1053" y2="272"/>
<line x1="975" y1="238" x2="1060" y2="272"/>
</g>
<polygon points="160,256 300,256 380,256.5 436,258 440,263 470,266 520,268 600,269 700,268.5 800,266.5 860,265 940,264 987,263 987,529 158,529 158,262" fill="#43007a"/>
<polygon points="160,255.5 173.6,255.5 170.8,266.5" fill="#18083c"/>
<polygon points="174,255.5 185.9,255.5 183.45,265.5" fill="#2a0440"/>
<polygon points="188,255.5 203.3,255.5 200.15,266.5" fill="#1a0a44"/>
<polygon points="202,255.5 210.5,255.5 208.75,264.5" fill="#2c0440"/>
<polygon points="216,255.5 226.2,255.5 224.1,261.5" fill="#18104c"/>
<polygon points="231,255.5 242.9,255.5 240.45,263.5" fill="#16104c"/>
<polygon points="277,255.5 287.2,255.5 285.1,261.5" fill="#1a0c50"/>
<polygon points="295,255.5 303.5,255.5 301.75,260.5" fill="#1a0c50"/>
<polygon points="314,255.5 325.9,255.5 323.45,263.5" fill="#180c4c"/>
<polygon points="342,255.5 350.5,255.5 348.75,260.5" fill="#1a0c50"/>
<polygon points="354,255.5 365.9,255.5 363.45,263.5" fill="#180a48"/>
<polygon points="380,255.5 388.5,255.5 386.75,260.5" fill="#1a0a4c"/>
<polygon points="396,255.5 409.6,255.5 406.8,265.5" fill="#1a0848"/>
<polygon points="420,255.5 428.5,255.5 426.75,261.5" fill="#1a0848"/>
<polygon points="434,255.5 445.9,255.5 443.45,264.5" fill="#1c0644"/>
<polygon points="452,255.5 462.2,255.5 460.1,264.5" fill="#1c0644"/>
<polygon points="137,184.9 140.4,185.4 143.8,204.4 147.3,223.4 152.5,233.7 159.4,249.3 160.2,256.2 160.2,529 158,529 137,443" fill="url(#lface)"/>
<path d="M277.3,181.6 Q282.2,184.6 285.6,192 Q290.5,203.5 292.6,221.5" fill="none" stroke="#f4ffe0" stroke-width="1.5" stroke-linecap="round"/>
</g>
<!-- cursors -->
<line x1="277.5" y1="53" x2="277.5" y2="182" stroke="#3030c0" stroke-width="1"/>
<line x1="45" y1="428.5" x2="137" y2="428.5" stroke="#6060c8" stroke-width="1"/>
<line x1="330.5" y1="53" x2="330.5" y2="179" stroke="#202020" stroke-width="1"/>
<line x1="330.5" y1="179" x2="330.5" y2="529" stroke="#b8b0c4" stroke-width="1"/>
<line x1="45" y1="510.5" x2="158" y2="510.5" stroke="#909090" stroke-width="1"/>
<line x1="158" y1="510.5" x2="1025" y2="510.5" stroke="#b8b0c4" stroke-width="1"/>
<!-- color scale -->
<rect x="1027.5" y="147.5" width="29" height="285" fill="url(#cs)" stroke="#9a9a9a" stroke-width=".8"/>
<g stroke="#001008" stroke-opacity=".6" stroke-width="1">
<line x1="1028" y1="161.5" x2="1057.5" y2="161.5"/><line x1="1028" y1="190.5" x2="1057.5" y2="190.5"/><line x1="1028" y1="218.5" x2="1057.5" y2="218.5"/><line x1="1028" y1="247.5" x2="1057.5" y2="247.5"/><line x1="1028" y1="275.5" x2="1057.5" y2="275.5"/><line x1="1028" y1="304.5" x2="1057.5" y2="304.5"/><line x1="1028" y1="332.5" x2="1057.5" y2="332.5"/><line x1="1028" y1="361.5" x2="1057.5" y2="361.5"/><line x1="1028" y1="389.5" x2="1057.5" y2="389.5"/><line x1="1028" y1="418.5" x2="1057.5" y2="418.5"/>
</g>
<!-- plot zoom icons -->
<g id="zoomicons">
<rect x="46" y="54" width="16" height="30" fill="#ececec" opacity=".9"/>
<line x1="53.6" y1="61.2" x2="58.4" y2="64.6" stroke="#8a8a8a" stroke-width="1.3" stroke-linecap="round"/>
<circle cx="51.4" cy="58.8" r="3" fill="#cfe9f6" stroke="#3f8dbb" stroke-width="1.5"/>
<path d="M49.6,58.8 H53.2 M51.4,57 V60.6" stroke="#3f8dbb" stroke-width=".9"/>
<line x1="53.6" y1="76.8" x2="58.4" y2="80.4" stroke="#8a8a8a" stroke-width="1.3" stroke-linecap="round"/>
<circle cx="51.4" cy="74.2" r="3" fill="#c8c8c8" stroke="#9a9a9a" stroke-width="1.5"/>
<circle cx="50" cy="80" r="2" fill="#9c9c9c"/>
<line x1="995.8" y1="518.8" x2="1001" y2="523.4" stroke="#9a9a9a" stroke-width="1.3" stroke-linecap="round"/>
<circle cx="993.6" cy="516.3" r="2.8" fill="#c4e6f4" stroke="#4a90b8" stroke-width="1.4"/>
<path d="M992,516.3 H995.2" stroke="#4a90b8" stroke-width=".9"/>
<line x1="1013.6" y1="518.8" x2="1018.6" y2="523.2" stroke="#9a9a9a" stroke-width="1.3" stroke-linecap="round"/>
<circle cx="1011.4" cy="516.3" r="2.8" fill="#9fe0ee" stroke="#3aa8c8" stroke-width="1.4"/>
<path d="M1009.8,516.3 H1013" stroke="#3aa8c8" stroke-width=".9"/>
</g>

<!-- toolbar icons -->
<g id="icons">
<defs>
<linearGradient id="cam" x1="0" y1="0" x2="0" y2="1"><stop offset="0" stop-color="#f2f2f2"/><stop offset=".55" stop-color="#dadada"/><stop offset="1" stop-color="#c6c6c6"/></linearGradient>
<radialGradient id="lens" cx=".5" cy=".5" r=".5"><stop offset="0" stop-color="#383838"/><stop offset=".38" stop-color="#4a4a4a"/><stop offset=".5" stop-color="#a0a0a0"/><stop offset=".8" stop-color="#c4c4c4"/><stop offset="1" stop-color="#9a9a9a"/></radialGradient>
<linearGradient id="gearg" gradientUnits="userSpaceOnUse" x1="0" y1="-8" x2="0" y2="8"><stop offset="0" stop-color="#ececec"/><stop offset=".5" stop-color="#d2d2d2"/><stop offset="1" stop-color="#bdbdbd"/></linearGradient>
<linearGradient id="gearr" gradientUnits="userSpaceOnUse" x1="0" y1="-4.5" x2="0" y2="4.5"><stop offset="0" stop-color="#7e7e7e"/><stop offset=".55" stop-color="#a8a8a8"/><stop offset="1" stop-color="#d8d8d8"/></linearGradient>
</defs>
<rect x="22" y="7.5" width="22" height="13.5" rx="1.5" fill="url(#cam)" stroke="#d0d0d0" stroke-width=".6"/>
<rect x="24.5" y="8" width="1.2" height="12" fill="#f8f8f8" opacity=".8"/><rect x="27" y="8" width="1.2" height="12" fill="#f8f8f8" opacity=".8"/><rect x="29.3" y="8" width="1" height="12" fill="#f4f4f4" opacity=".7"/>
<rect x="22.3" y="20" width="21.4" height="1.3" fill="#a6a6a6"/>
<circle cx="35.9" cy="14.2" r="4.9" fill="url(#lens)"/>
<!-- scrollbars icon -->
<rect x="912.5" y="6" width="21" height="11.5" fill="#b2b2b2" stroke="#cfcfcf" stroke-width="1"/>
<polygon points="907.3,8 909.3,5.8 911.3,8" fill="#222"/><rect x="907.6" y="10" width="3.4" height="4" fill="#222"/><polygon points="907.3,15.6 909.3,17.8 911.3,15.6" fill="#222"/>
<polygon points="915,18.8 912.8,20.7 915,22.6" fill="#222"/><rect x="919.2" y="19.2" width="7" height="3" fill="#222"/><polygon points="930.6,18.8 932.8,20.7 930.6,22.6" fill="#222"/>
<!-- freq axis icon -->
<rect x="959" y="6.5" width="25.5" height="16.5" fill="#ffffff" stroke="#d6d6d6" stroke-width="1"/>
<g stroke="#d2d2d2" stroke-width="1"><line x1="967.5" y1="7" x2="967.5" y2="23"/><line x1="973" y1="7" x2="973" y2="23"/><line x1="977" y1="7" x2="977" y2="23"/><line x1="980.5" y1="7" x2="980.5" y2="23"/><line x1="982.6" y1="7" x2="982.6" y2="23"/></g>
<!-- limits icon -->
<rect x="1003" y="5" width="25" height="19.5" rx="2" fill="#fbfbfb" stroke="#e2e2e2" stroke-width=".8" stroke-dasharray="1.5 1.5"/>
<g stroke="#1a1a1a" stroke-width="1" fill="none">
<path d="M1015.3,6.5 V11.5 M1013.3,8.7 L1015.3,6.5 L1017.3,8.7"/>
<path d="M1015.3,17.5 V22.5 M1013.3,20.3 L1015.3,22.5 L1017.3,20.3"/>
<path d="M1003.5,14.4 H1008.5 M1005.7,12.4 L1003.5,14.4 L1005.7,16.4"/>
<path d="M1022,14.4 H1027 M1024.8,12.4 L1027,14.4 L1024.8,16.4"/>
</g>
<!-- gear icon -->
<g transform="translate(1056.7,14.6)">
<g fill="url(#gearg)"><rect x="-1.9" y="-8" width="3.8" height="16" rx="1"/><rect x="-1.9" y="-8" width="3.8" height="16" rx="1" transform="rotate(45)"/><rect x="-1.9" y="-8.6" width="3.8" height="17.2" rx="1" transform="rotate(90)"/><rect x="-1.9" y="-8" width="3.8" height="16" rx="1" transform="rotate(135)"/></g>
<circle r="6.2" fill="url(#gearg)"/>
<circle r="3.9" fill="#fafafa" stroke="url(#gearr)" stroke-width="1.5"/>
</g>
</g>
</svg>
<div class="lbl yl" style="top:81.3px">150</div>
<div class="lbl yl" style="top:138.0px">100</div>
<div class="lbl yl" style="top:194.7px">50</div>
<div class="lbl yl" style="top:251.4px">0</div>
<div class="lbl yl" style="top:308.1px">-50</div>
<div class="lbl yl" style="top:364.8px">-100</div>
<div class="lbl yl" style="top:421.5px">-150</div>
<div class="lbl yl" style="top:478.2px">-200</div>
<div class="lbl xl" style="left:29.6px">8</div>
<div class="lbl xl" style="left:43.5px">9</div>
<div class="lbl xl" style="left:56.0px">10</div>
<div class="lbl xl" style="left:138.0px">20</div>
<div class="lbl xl" style="left:186.0px">30</div>
<div class="lbl xl" style="left:220.0px">40</div>
<div class="lbl xl" style="left:246.4px">50</div>
<div class="lbl xl" style="left:268.0px">60</div>
<div class="lbl xl" style="left:286.3px">70</div>
<div class="lbl xl" style="left:328.5px">100</div>
<div class="lbl xl" style="left:410.5px">200</div>
<div class="lbl xl" style="left:458.5px">300</div>
<div class="lbl xl" style="left:492.5px">400</div>
<div class="lbl xl" style="left:518.9px">500</div>
<div class="lbl xl" style="left:540.5px">600</div>
<div class="lbl xl" style="left:574.6px">800</div>
<div class="lbl xl" style="left:601.0px">1k</div>
<div class="lbl xl" style="left:683.0px">2k</div>
<div class="lbl xl" style="left:731.0px">3k</div>
<div class="lbl xl" style="left:765.0px">4k</div>
<div class="lbl xl" style="left:791.4px">5k</div>
<div class="lbl xl" style="left:813.0px">6k</div>
<div class="lbl xl" style="left:831.3px">7k</div>
<div class="lbl xl" style="left:847.1px">8k</div>
<div class="lbl xl" style="left:873.5px">10k</div>
<div class="lbl xl" style="left:955.5px">20k</div>
<div class="lbl" style="left:995px;top:532px;width:40px;text-align:right">30kHz</div>
<div class="tl" style="left:45.5px;top:86px;font-size:7px">0</div>
<div class="tl" style="left:48.6px;top:97px;font-size:7.4px">60</div>
<div class="tl" style="left:50.2px;top:109px;font-size:7.7px">120</div>
<div class="tl" style="left:51px;top:121.3px;font-size:8px">180</div>
<div class="tl" style="left:52px;top:134.3px;font-size:8.2px">240</div>
<div class="tl" style="left:53px;top:148.3px;font-size:8.4px">300</div>
<div class="tl" style="left:843.6px;top:86.4px;font-size:7px">0</div>
<div class="tl" style="left:876px;top:97.8px;font-size:7.4px">60</div>
<div class="tl" style="left:909.4px;top:109.2px;font-size:7.7px">120</div>
<div class="tl" style="left:944px;top:121.4px;font-size:8px">180</div>
<div class="tl" style="left:979.4px;top:134.7px;font-size:8.2px">240</div>
<div class="tl" style="left:1014.7px;top:148.3px;font-size:8.4px">300</div>
<!-- color scale labels -->
<div class="lbl" style="left:1031px;top:138px;width:20px;text-align:center">55</div>
<div class="lbl" style="left:1031px;top:433px;width:22px;text-align:center">-5</div>
<div class="lbl" style="left:1059px;top:157px">52</div>
<div class="lbl" style="left:1059px;top:185px">46</div>
<div class="lbl" style="left:1059px;top:214px">40</div>
<div class="lbl" style="left:1059px;top:242px">34</div>
<div class="lbl" style="left:1059px;top:270px">28</div>
<div class="lbl" style="left:1059px;top:299px">22</div>
<div class="lbl" style="left:1059px;top:328px">16</div>
<div class="lbl" style="left:1059px;top:356px">10</div>
<div class="lbl" style="left:1062px;top:385px">4</div>
<div class="lbl" style="left:1059.5px;top:413px">-2</div>
<!-- info label -->
<div class="abs" style="left:794px;top:53px;width:230px;height:10px;background:#fff;border:1px solid #cfcfcf;border-top:none;border-right:none;font-size:8.7px;line-height:10px;text-align:right;white-space:pre;box-sizing:border-box;padding-right:1.5px;color:#111">500 ms window, 100 ms rise time,  1.7 Hz resn, t = 300 ms</div>
<!-- generate / range buttons -->
<div class="btn" style="left:46px;top:512px;width:46px;height:15px;line-height:13px;">Generate</div>
<div class="btn" style="left:955px;top:481px;width:67px;height:13px;line-height:11px;">10 .. 200</div>
<div class="btn" style="left:955px;top:497px;width:67px;height:13px;line-height:11px;">20 .. 20,000</div>
<!-- cursor value boxes -->
<div class="abs" style="left:12px;top:505px;width:32px;height:11px;box-sizing:border-box;border:1px solid #3838b8;background:#fff;color:#2020a0;font-size:9px;line-height:9px;text-align:center;">-223.4</div>
<div class="abs" style="left:319px;top:531px;width:21px;height:10px;box-sizing:border-box;border:1px solid #3838b8;border-radius:2.5px;background:#fff;color:#2020a0;font-size:8.5px;line-height:8px;text-align:center;">86.3</div>
<!-- left scrollbar -->
<div class="abs" style="left:0;top:52px;width:11px;height:476px;background:#fff;border-right:1px solid #b8b8b8;box-sizing:border-box"></div>
<div class="abs sbb" style="left:0;top:52px;width:11px;height:11px;"><svg width="11" height="11" style="position:absolute;left:-1px;top:-1px"><polygon points="3,7 5.5,4 8,7" fill="#303030"/></svg></div>
<div class="abs sbb" style="left:0;top:517px;width:11px;height:11px;"><svg width="11" height="11" style="position:absolute;left:-1px;top:-1px"><polygon points="3,4.5 5.5,7.5 8,4.5" fill="#303030"/></svg></div>
<!-- bottom scrollbar -->
<div class="abs" style="left:44px;top:546px;width:980px;height:10px;background:#fff;border:1px solid #c2c2c2;border-left:none;box-sizing:border-box"></div>
<div class="abs" style="left:189px;top:546px;width:823px;height:10px;background:linear-gradient(#fafafa,#ededed 45%,#dedede 55%,#e6e6e6);border:1px solid #b6b6b6;border-right:none;box-sizing:border-box"></div>
<div class="abs" style="left:148px;top:547px;width:1px;height:8px;background:#d4d4d4"></div>
<div class="abs" style="left:154px;top:547px;width:1px;height:8px;background:#e0e0e0"></div>
<div class="abs" style="left:167px;top:547px;width:1px;height:8px;background:#d8d8d8"></div>
<div class="abs" style="left:180px;top:547px;width:1px;height:8px;background:#d8d8d8"></div>
<div class="abs sbb" style="left:44px;top:546px;width:10px;height:10px;"><svg width="10" height="10" style="position:absolute;left:-1px;top:-1px"><polygon points="6.5,2.5 3.5,5 6.5,7.5" fill="#303030"/></svg></div>
<div class="abs sbb" style="left:1012px;top:546px;width:12px;height:10px;"><svg width="12" height="10" style="position:absolute;left:-1px;top:-1px"><polygon points="4.5,2.5 7.5,5 4.5,7.5" fill="#303030"/></svg></div>
<!-- legend -->
<div class="abs" style="left:270px;top:558px;width:527px;height:19px;background:#fff;border:2px solid #c9c9c9;border-right-color:#b4b4b4;border-bottom-color:#b4b4b4;box-sizing:border-box;"></div>
<div class="abs cb" style="left:278px;top:563px;"><svg width="9" height="9" style="position:absolute;left:0;top:0"><path d="M2,4.5 L3.8,6.6 L7,1.8" fill="none" stroke="#333" stroke-width="1.2"/></svg></div>
<div class="lbl" style="left:292px;top:563px;color:#e8862a;-webkit-text-stroke:0">io6</div>
<div class="lbl" style="left:473px;top:563px;color:#e8862a;-webkit-text-stroke:0">3.7 dB</div>
<div class="abs" style="left:402px;top:567px;width:24px;height:2px;background:#e88a30"></div>
<div class="abs cb" style="left:537px;top:563px;border-color:#d0d0d0"><svg width="9" height="9" style="position:absolute;left:0;top:0"><path d="M2,4.5 L3.8,6.6 L7,1.8" fill="none" stroke="#b0b0b0" stroke-width="1.2"/></svg></div>
<div class="lbl" style="left:551px;top:563px;color:#6e6e6e;-webkit-text-stroke:0">No overlay</div>
<div class="lbl" style="left:746px;top:563px;color:#c6c6c6;-webkit-text-stroke:0">dB</div>
</body>
</html>
